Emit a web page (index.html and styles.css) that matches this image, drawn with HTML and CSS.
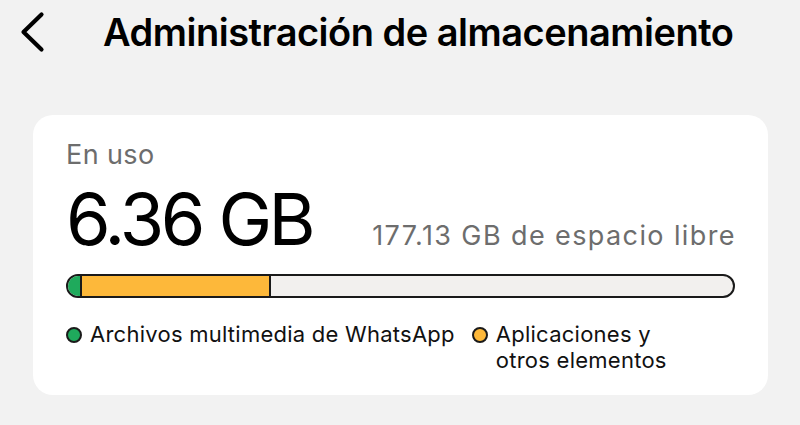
FILE: index.html
```html
<!DOCTYPE html>
<html lang="es">
<head>
<meta charset="utf-8">
<link rel="stylesheet" href="styles.css">
</head>
<body>
<div class="screen">
  <header class="topbar">
    <svg class="back" width="26" height="42" viewBox="0 0 26 42">
      <path d="M22.5 3.5 L4.5 21 L22.5 38.5" fill="none" stroke="#000" stroke-width="4.2" stroke-linecap="round" stroke-linejoin="round"/>
    </svg>
    <h1 class="title">Administración de almacenamiento</h1>
  </header>
  <section class="card">
    <div class="label">En uso</div>
    <div class="usage-row">
      <div class="used">6.36 GB</div>
      <div class="free">177.13 GB de espacio libre</div>
    </div>
    <div class="bar">
      <div class="seg seg-green" style="width:14px"></div>
      <div class="seg seg-yellow" style="width:189px"></div>
    </div>
    <div class="legend">
      <div class="legend-item item-1">
        <span class="dot dot-green"></span>
        <span class="legend-text">Archivos multimedia de WhatsApp</span>
      </div>
      <div class="legend-item item-2">
        <span class="dot dot-yellow"></span>
        <span class="legend-text">Aplicaciones y<br>otros elementos</span>
      </div>
    </div>
  </section>
</div>
</body>
</html>
```

FILE: styles.css
```css
* { box-sizing: border-box; }
html, body {
  margin: 0;
  padding: 0;
  background: #f2f2f2;
  width: 800px;
  height: 425px;
  overflow: hidden;
}
body {
  font-family: Inter, "Noto Sans", sans-serif;
  color: #000;
}
.screen {
  padding: 0 33px 0 33px;
}
.topbar {
  display: flex;
  align-items: center;
  height: 64px;
  margin-left: -14px;
}
.back {
  display: block;
  flex: none;
}
.title {
  margin: 0 0 0 58px;
  font-size: 38px;
  font-weight: 600;
  letter-spacing: -0.5px;
  line-height: 1;
}
.card {
  margin-top: 51px;
  width: 735px;
  height: 280px;
  background: #fff;
  border-radius: 20px;
  padding: 25px 33px 0 33px;
}
.label {
  font-size: 27px;
  color: #6d6d6d;
  line-height: 30px;
  letter-spacing: 0.4px;
}
.usage-row {
  display: flex;
  align-items: baseline;
  justify-content: space-between;
  margin-top: 11px;
}
.used {
  font-size: 72px;
  font-weight: 400;
  line-height: 76px;
  letter-spacing: -3.6px;
}
.free {
  font-size: 27px;
  color: #6d6d6d;
  letter-spacing: 1.4px;
  margin-right: -1px;
}
.bar {
  display: flex;
  margin-top: 17px;
  height: 24px;
  border: 2px solid #1a1a1a;
  border-radius: 12px;
  background: #f2f0ee;
  overflow: hidden;
}
.seg { height: 100%; }
.seg-green { background: #1faa5c; border-right: 2px solid #1a1a1a; }
.seg-yellow { background: #fdb83a; border-right: 2px solid #1a1a1a; }
.legend {
  display: flex;
  margin-top: 23px;
  gap: 17px;
}
.legend-item {
  display: flex;
  align-items: flex-start;
}
.dot {
  flex: none;
  width: 16px;
  height: 16px;
  border-radius: 50%;
  border: 2px solid #1a1a1a;
  margin-top: 6px;
  margin-right: 8px;
}
.dot-green { background: #1faa5c; }
.dot-yellow { background: #fdb83a; }
.legend-text {
  font-size: 22px;
  line-height: 26px;
  letter-spacing: 0.25px;
  color: #111;
}
```
